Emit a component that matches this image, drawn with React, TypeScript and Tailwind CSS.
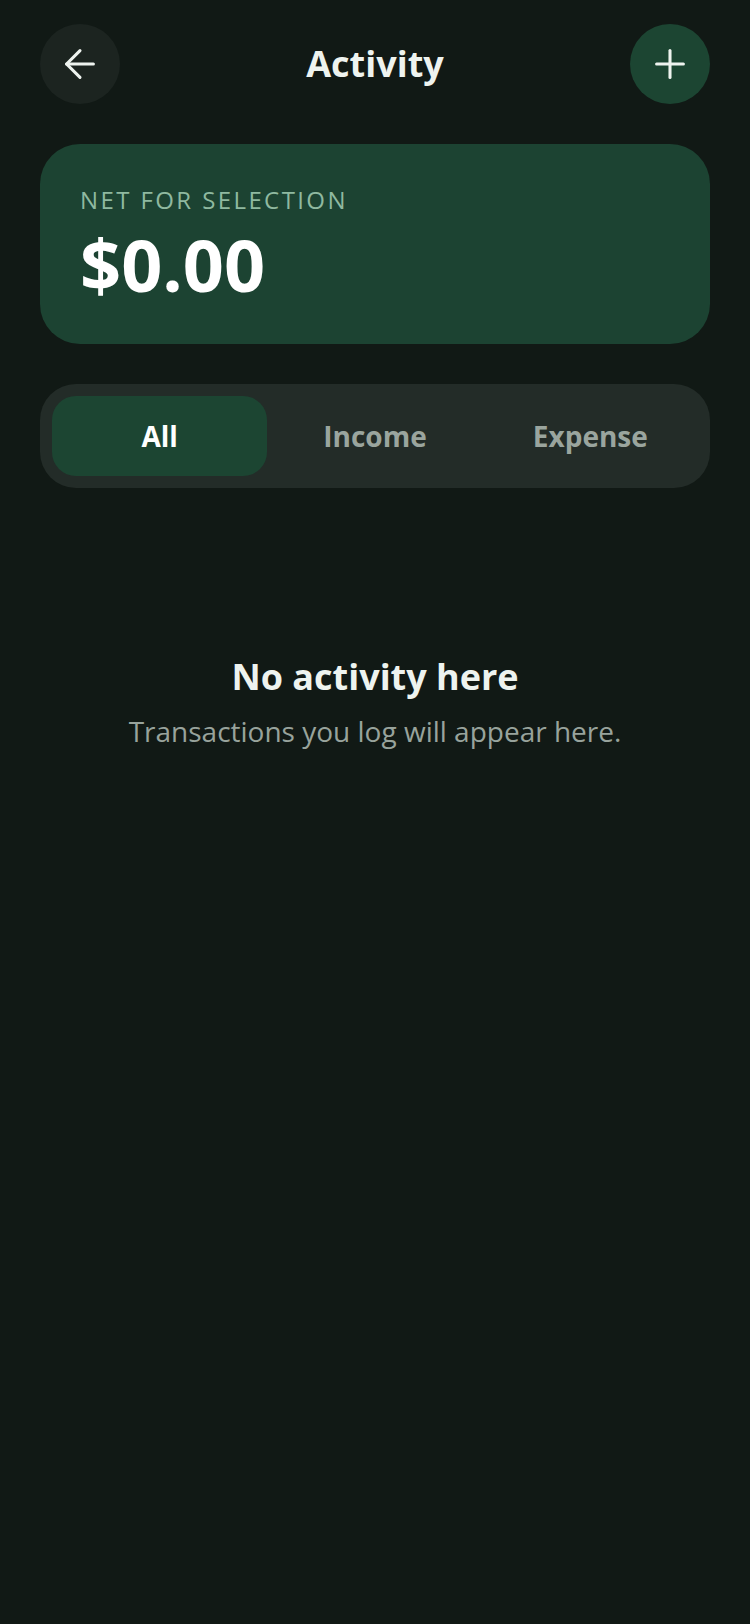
import { ArrowLeft, Plus } from 'lucide-react'

const tabs = ['All', 'Income', 'Expense']

export default function App() {
  const active = 'All'
  return (
    <div
      className="min-h-[1624px] w-full bg-[#111915] px-10 pt-6 text-[#eef3ef]"
      style={{ fontFamily: '"Open Sans", "Noto Sans", sans-serif' }}
    >
      <header className="flex h-20 items-center justify-between">
        <button className="flex h-20 w-20 items-center justify-center rounded-full bg-[#1c2420] text-[#eef3ef]">
          <ArrowLeft size={46} strokeWidth={1.6} />
        </button>
        <h1 className="text-[36px] font-bold leading-none">Activity</h1>
        <button className="flex h-20 w-20 items-center justify-center rounded-full bg-[#1c4532] text-[#eef3ef]">
          <Plus size={46} strokeWidth={1.6} />
        </button>
      </header>

      <section className="mt-10 rounded-[40px] bg-[#1c4332] px-10 pt-10 pb-11">
        <p className="text-[24px] leading-8 tracking-[0.1em] text-[#8fb9a0]">NET FOR SELECTION</p>
        <p className="mt-3 text-[72px] font-bold leading-none text-white">$0.00</p>
      </section>

      <nav className="mt-10 grid grid-cols-3 rounded-[36px] bg-[#232c28] p-3">
        {tabs.map((t) => (
          <button
            key={t}
            className={`h-20 rounded-[24px] text-[28px] font-bold ${
              t === active ? 'bg-[#1c4532] text-white' : 'text-[#9aa59e]'
            }`}
          >
            {t}
          </button>
        ))}
      </nav>

      <div className="mt-[167px] flex flex-col items-center text-center">
        <h2 className="text-[36px] font-bold leading-[44px]">No activity here</h2>
        <p className="mt-3 text-[28px] leading-10 text-[#98a39c]">Transactions you log will appear here.</p>
      </div>
    </div>
  )
}
